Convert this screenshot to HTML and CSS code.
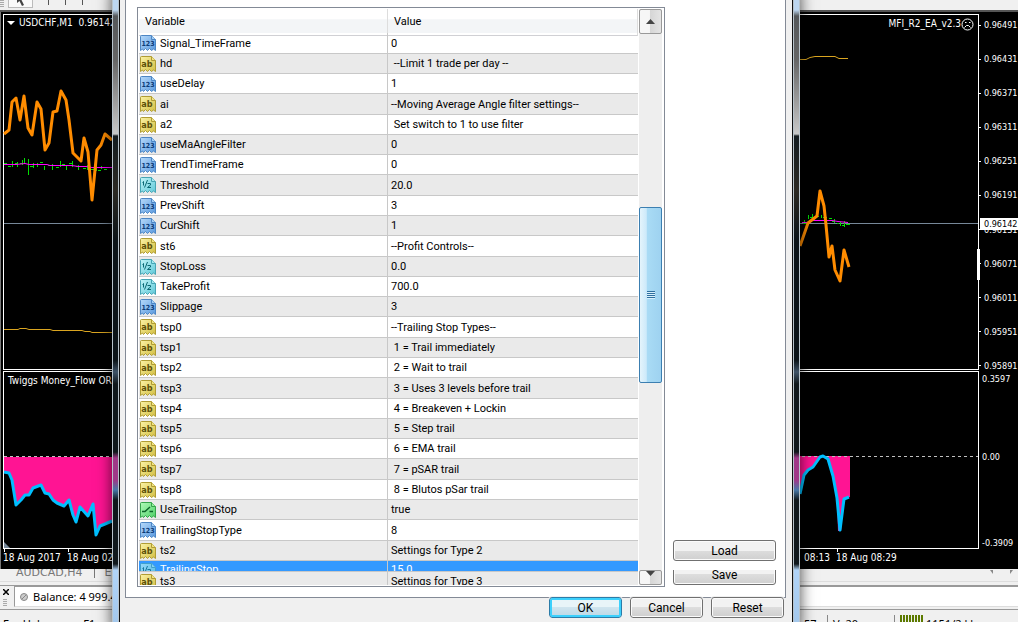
FILE: index.html
```html
<!DOCTYPE html>
<html lang="en">
<head>
    <meta charset="UTF-8">
    <meta name="viewport" content="width=device-width, initial-scale=1.0">
    <title>USDCHF,M1</title>
    <link rel="stylesheet" href="styles.css">
</head>
<body>

<!-- input type icons -->
<svg class="sprite" width="0" height="0" aria-hidden="true">
    <defs>
        <linearGradient id="blue" x2="1" y2="1"><stop offset="0" stop-color="#b4d8fa"/><stop offset="1" stop-color="#5b9ade"/></linearGradient>
        <linearGradient id="yellow" x2="1" y2="1"><stop offset="0" stop-color="#fbf2a4"/><stop offset="1" stop-color="#d3bf44"/></linearGradient>
        <linearGradient id="cyan" x2="1" y2="1"><stop offset="0" stop-color="#c0f4f8"/><stop offset="1" stop-color="#5fc8d8"/></linearGradient>
        <linearGradient id="green" x2="1" y2="1"><stop offset="0" stop-color="#b0fab8"/><stop offset="1" stop-color="#4fd068"/></linearGradient>
        <path id="note" d="M.5 1.5Q.5.5 1.5.5H11.5L15.5 4.5V15.5L13.5 14L11.5 15.5L9.5 13.5L7.5 15.5L5.5 13.5L3.5 15.5L2.5 14L.5 15.5Z"/>
        <path id="fold" d="M11.5.5V4.5H15.5"/>
        <symbol id="icon-int" viewBox="0 0 16 16">
            <use href="#note" fill="url(#blue)" stroke="#4d86c4"/>
            <use href="#fold" fill="#a5cff6" stroke="#4d86c4"/>
            <text x="8" y="11" fill="#0c3c78" class="glyph glyph-int">123</text>
        </symbol>
        <symbol id="icon-str" viewBox="0 0 16 16">
            <use href="#note" fill="url(#yellow)" stroke="#b09c34"/>
            <use href="#fold" fill="#f0e384" stroke="#b09c34"/>
            <text x="7" y="11" fill="#5c5008" class="glyph glyph-str">ab</text>
        </symbol>
        <symbol id="icon-num" viewBox="0 0 16 16">
            <use href="#note" fill="url(#cyan)" stroke="#46a4b4"/>
            <use href="#fold" fill="#a5e9f0" stroke="#46a4b4"/>
            <path d="M2.5 5.5L3.5 4.5V8.5M7.5 3L4.5 10.5M7.5 6.5H10.5V8L7.5 10.5H11" fill="none" stroke="#0b6874"/>
        </symbol>
        <symbol id="icon-bool" viewBox="0 0 16 16">
            <use href="#note" fill="url(#green)" stroke="#35a44b"/>
            <use href="#fold" fill="#98ee9f" stroke="#35a44b"/>
            <path d="M2 9.5H5L10 5M9.5 9.5H13" fill="none" stroke="#0b6428" stroke-width="1.4"/>
        </symbol>
    </defs>
</svg>

<main class="terminal">
    <div class="toolbar">
        <span class="grip"></span>
        <button class="tool" aria-label="Cursor">
            <svg width="12" height="12" viewBox="0 0 12 12"><path d="M2-6V5L4.500 3L7 8L9 7L6.500 2H10Z" transform="translate(0 -2)" fill="#444"/></svg>
        </button>
        <span class="sep"></span>
        <span class="sep"></span>
        <span class="sep"></span>
    </div>

    <section class="chart">
        <div class="pane price-pane">
            <div class="plot">
                <svg width="108" height="354" viewBox="4 15 108 354">
                    <path d="M4 223.500H112" stroke="#778899"/>
                    <path d="M4 329.500H18L20 328.500H26L29 329.500H50L53 330.500H82L85 331.500H90L92 332.500H112" class="line amber"/>
                    <path d="M4 163h3M8 166h3M12 161v6M15 163h2M17 162v5M20 163h2M22 160v5M24 158v6M28 159v16M30 166h3M33 163v5M37 163v4M40 162h3M44 166v4M48 165h4M52 164v6M56 167h3M60 161v6M62 164h3M66 166v4M69 163h3M72 161v6M76 166h2M78 165v5M83 168h3M87 165v5M90 169h4M96 165v6M98 170h3M101 166v3M104 169h3M108 167h3" class="line lime"/>
                    <path d="M4 164.500H16L25 163.500L29 164.500H47L50 165.500H72L78 166.500H86L92 167.500H112" class="line magenta"/>
                    <path d="M4 134L9 130L12 102L16 98L20 120L24 96L28 128L32 135L37 102L41 109L45 150L49 143L53 112L57 111L61 91L66 100L69 120L73 153L81 161L84 138L88 152L92 200L97 150L101 145L105 134L112 140" class="line orange"/>
                </svg>
                <h1 class="symbol"><svg width="8" height="5" viewBox="0 0 8 5"><path d="M0 0H8L4 4Z" fill="#fff"/></svg>USDCHF,M1&nbsp; 0.96142</h1>
                <svg width="178" height="354" viewBox="800 15 178 354">
                    <path d="M800 223.500H978" stroke="#778899"/>
                    <path d="M800 59.500H806L810 57.500L815 56.500H835L839 58.500H848" class="line amber"/>
                    <path d="M803 223h4M804 220v4M808 215v4M810 217h3M812 214v3M816 216h3M821 215v3M823 217h4M829 218h3M832 221h2M834 219v4M837 223h2M840 222v4M842 225h3M844 221v6M846 224h4" class="line lime"/>
                    <path d="M802 222.500H808L812 220.500H832L838 221.500L848 222.500" class="line magenta"/>
                    <path d="M800 246L808 223L817 216L820 191L824 206L826 225L829 257L832 246L835 270L840 281L844 250L849 267" class="line orange"/>
                    <path d="M978.500 249V280" stroke="#fff" stroke-width="3"/>
                </svg>
                <p class="expert">MFI_R2_EA_v2.3<svg width="13" height="13" viewBox="0 0 13 13"><circle cx="6.500" cy="6.500" r="5.500" fill="none" stroke="#fff"/><path d="M4 4.500H5.500M8 4.500H9.500M3.500 9.500L5.500 7.500H7.500L9.500 9.500" fill="none" stroke="#fff"/></svg></p>
            </div>
            <div class="axis price-axis">
                <span>0.96491</span>
                <span>0.96431</span>
                <span>0.96371</span>
                <span>0.96311</span>
                <span>0.96251</span>
                <span>0.96191</span>
                <span>0.96131</span>
                <span>0.96071</span>
                <span>0.96011</span>
                <span>0.95951</span>
                <span>0.95891</span>
                <b class="bid">0.96142</b>
            </div>
        </div>

        <div class="pane flow-pane">
            <div class="plot">
                <svg width="108" height="176" viewBox="4 372 108 176">
                    <path d="M4 457V472L9 473L12 480L16 505L21 500L25 495L29 495L33 488L41 485L45 493L49 494L53 500L57 503L64 506L69 500L73 515L76 522L80 507L88 516L93 504L96 535L100 526L105 524L112 521V457Z" fill="#ff1493"/>
                    <path d="M4 456.500H112" class="line zero"/>
                    <path d="M4 472L9 473L12 480L16 505L21 500L25 495L29 495L33 488L41 485L45 493L49 494L53 500L57 503L64 506L69 500L73 515L76 522L80 507L88 516L93 504L96 535L100 526L105 524L112 521" class="line sky"/>
                    <path d="M4 542L10 548H4Z" fill="#778899"/>
                </svg>
                <p class="indicator">Twiggs Money_Flow ORIG</p>
                <svg width="178" height="176" viewBox="800 372 178 176">
                    <path d="M800 456V492L804 475L808 470L813 467L820 457L828 457L833 476L837 498L838 531H841L844 499L850 497V456Z" fill="#ff1493"/>
                    <path d="M802 456.500H978" class="line zero"/>
                    <path d="M800 494L804 475L808 470L813 467L820 457L823 456L828 459L833 476L837 498L840 530L844 499L849 497" class="line sky"/>
                </svg>
            </div>
            <div class="axis flow-axis">
                <span>0.3597</span>
                <span>0.00</span>
                <span>-0.3909</span>
            </div>
        </div>

        <div class="times">
            <div class="times-start"><span>18 Aug 2017</span><span>18 Aug 02:55</span></div>
            <div class="times-end"><span>08:13</span><span>18 Aug 08:29</span></div>
        </div>
    </section>

    <nav class="chart-tabs">
        <a href="#">AUDCAD,H4</a><i></i><a href="#">EURUSD,H1</a>
        <svg class="tab-arrows" width="24" height="5" viewBox="0 0 24 5"><path d="M0 0H3V4ZM20 0H23L20 4Z" fill="#888"/></svg>
    </nav>

    <div class="account">
        <div class="account-side">
            <button class="close" aria-label="Close"><svg width="6" height="6" viewBox="0 0 6 6"><path d="M0 0L6 6M6 0L0 6" stroke="#000" stroke-width="1.500"/></svg></button>
            <span class="grip"></span>
        </div>
        <div class="balance">
            <svg width="8" height="8" viewBox="0 0 8 8"><circle cx="4" cy="4" r="3.500" fill="#ccc" stroke="#888"/><path d="M2 6L6 2" stroke="#888"/></svg>
            Balance: 4 999.40
        </div>
    </div>

    <footer class="status">
        <span class="help">For Help, press F1</span>
        <div class="status-end">
            <span>57</span>
            <span>V: 20</span>
            <span><i class="signal"></i>1151/2 kb</span>
        </div>
    </footer>
</main>

<section class="dialog" role="dialog" aria-label="Expert inputs">
    <div class="glass"></div>
    <div class="dialog-body">
        <div class="tab-page">
            <div class="list">
                <table>
                    <thead>
                        <tr><th>Variable</th><th>Value</th></tr>
                    </thead>
                    <tbody>
                        <tr><td><svg class="icon"><use href="#icon-int"/></svg>Signal_TimeFrame</td><td>0</td></tr>
                        <tr><td><svg class="icon"><use href="#icon-str"/></svg>hd</td><td>&nbsp;--Limit 1 trade per day --</td></tr>
                        <tr><td><svg class="icon"><use href="#icon-int"/></svg>useDelay</td><td>1</td></tr>
                        <tr><td><svg class="icon"><use href="#icon-str"/></svg>ai</td><td>--Moving Average Angle filter settings--</td></tr>
                        <tr><td><svg class="icon"><use href="#icon-str"/></svg>a2</td><td>&nbsp;Set switch to 1 to use filter</td></tr>
                        <tr><td><svg class="icon"><use href="#icon-int"/></svg>useMaAngleFilter</td><td>0</td></tr>
                        <tr><td><svg class="icon"><use href="#icon-int"/></svg>TrendTimeFrame</td><td>0</td></tr>
                        <tr><td><svg class="icon"><use href="#icon-num"/></svg>Threshold</td><td>20.0</td></tr>
                        <tr><td><svg class="icon"><use href="#icon-int"/></svg>PrevShift</td><td>3</td></tr>
                        <tr><td><svg class="icon"><use href="#icon-int"/></svg>CurShift</td><td>1</td></tr>
                        <tr><td><svg class="icon"><use href="#icon-str"/></svg>st6</td><td>--Profit Controls--</td></tr>
                        <tr><td><svg class="icon"><use href="#icon-num"/></svg>StopLoss</td><td>0.0</td></tr>
                        <tr><td><svg class="icon"><use href="#icon-num"/></svg>TakeProfit</td><td>700.0</td></tr>
                        <tr><td><svg class="icon"><use href="#icon-int"/></svg>Slippage</td><td>3</td></tr>
                        <tr><td><svg class="icon"><use href="#icon-str"/></svg>tsp0</td><td>--Trailing Stop Types--</td></tr>
                        <tr><td><svg class="icon"><use href="#icon-str"/></svg>tsp1</td><td>&nbsp;1 = Trail immediately</td></tr>
                        <tr><td><svg class="icon"><use href="#icon-str"/></svg>tsp2</td><td>&nbsp;2 = Wait to trail</td></tr>
                        <tr><td><svg class="icon"><use href="#icon-str"/></svg>tsp3</td><td>&nbsp;3 = Uses 3 levels before trail</td></tr>
                        <tr><td><svg class="icon"><use href="#icon-str"/></svg>tsp4</td><td>&nbsp;4 = Breakeven + Lockin</td></tr>
                        <tr><td><svg class="icon"><use href="#icon-str"/></svg>tsp5</td><td>&nbsp;5 = Step trail</td></tr>
                        <tr><td><svg class="icon"><use href="#icon-str"/></svg>tsp6</td><td>&nbsp;6 = EMA trail</td></tr>
                        <tr><td><svg class="icon"><use href="#icon-str"/></svg>tsp7</td><td>&nbsp;7 = pSAR trail</td></tr>
                        <tr><td><svg class="icon"><use href="#icon-str"/></svg>tsp8</td><td>&nbsp;8 = Blutos pSar trail</td></tr>
                        <tr><td><svg class="icon"><use href="#icon-bool"/></svg>UseTrailingStop</td><td>true</td></tr>
                        <tr><td><svg class="icon"><use href="#icon-int"/></svg>TrailingStopType</td><td>8</td></tr>
                        <tr><td><svg class="icon"><use href="#icon-str"/></svg>ts2</td><td>Settings for Type 2</td></tr>
                        <tr class="selected"><td><svg class="icon"><use href="#icon-num"/></svg>TrailingStop</td><td>15.0</td></tr>
                        <tr><td><svg class="icon"><use href="#icon-str"/></svg>ts3</td><td>Settings for Type 3</td></tr>
                    </tbody>
                </table>
                <div class="scrollbar">
                    <button class="scroll-btn" aria-label="Scroll up"><svg width="9" height="5" viewBox="0 0 9 5"><path d="M4.500 0L9 5H0Z" fill="#444"/></svg></button>
                    <div class="thumb"><i></i></div>
                    <button class="scroll-btn down" aria-label="Scroll down"><svg width="9" height="5" viewBox="0 0 9 5"><path d="M0 0H9L4.500 5Z" fill="#444"/></svg></button>
                </div>
            </div>
            <div class="file-actions">
                <button class="btn">Load</button>
                <div class="clip"><button class="btn">Save</button></div>
            </div>
        </div>
        <div class="dialog-actions">
            <button class="btn default">OK</button>
            <button class="btn">Cancel</button>
            <button class="btn">Reset</button>
        </div>
    </div>
    <div class="glass"></div>
</section>

</body>
</html>
```
FILE: styles.css
```css
* {
    box-sizing: border-box;
}
body {
    margin: 0;
    position: relative;
    height: 100vh;
    overflow: hidden;
    background-color: #f0f0f0;
    font-family: "DejaVu Sans Condensed", "DejaVu Sans", sans-serif;
    font-size: 10px;
}
h1, p {
    margin: 0;
    font-size: 10px;
    font-weight: normal;
}
svg {
    flex: none;
}
button {
    padding: 0;
    font-family: inherit;
}
.sprite {
    position: absolute;
}
.glyph {
    font-family: "DejaVu Sans Condensed", "DejaVu Sans", sans-serif;
    font-weight: bold;
    text-anchor: middle;
}
.glyph-int {
    font-size: 7px;
}
.glyph-str {
    font-size: 9px;
}

/* trading terminal */
.toolbar {
    display: flex;
    height: 12px;
    border-bottom: 2px solid #555;
    background-color: #f0f0f0;
}
.grip {
    width: 4px;
    height: 8px;
    background: repeating-linear-gradient(#aaa 0 1px, transparent 1px 2px);
}
.tool {
    display: flex;
    width: 25px;
    height: 8px;
    margin: 0 15px 0 4px;
    justify-content: center;
    overflow: hidden;
    border: 1px solid #bbb;
    border-top: none;
    background-color: #fafafa;
}
.sep {
    width: 1px;
    height: 5px;
    margin-right: 16px;
    background-color: #555;
}
.chart {
    height: 557px;
    padding: 2px 0 0 3px;
    background-color: #000;
    color: #fff;
    box-shadow: inset 1px 0 #777;
}
.pane {
    display: flex;
}
.plot {
    position: relative;
    display: flex;
    flex: 1;
    justify-content: space-between;
    border: 1px solid #fff;
}
.plot svg {
    overflow: visible;
}
.price-pane {
    height: 356px;
}
.flow-pane {
    height: 178px;
    margin-top: 1px;
}
.line {
    fill: none;
    stroke-width: 1;
    stroke-linejoin: round;
}
.amber {
    stroke: #daa520;
}
.lime {
    stroke: #00e000;
    shape-rendering: crispEdges;
}
.magenta {
    stroke: #ff00ff;
}
.orange {
    stroke: #ff8c00;
    stroke-width: 3;
}
.sky {
    stroke: #00bfff;
    stroke-width: 3;
}
.zero {
    stroke: #c0c0c0;
    stroke-dasharray: 3 3;
}
.symbol, .expert, .indicator {
    position: absolute;
    top: 1px;
    display: flex;
    align-items: center;
    line-height: 14px;
    white-space: nowrap;
}
.symbol {
    left: 3px;
    gap: 4px;
}
.expert {
    right: 4px;
    top: 2px;
}
.indicator {
    left: 4px;
    top: 2px;
}
.axis {
    position: relative;
    width: 39px;
    font-size: 9px;
    line-height: 12px;
}
.price-axis {
    display: flex;
    flex-direction: column;
    justify-content: space-between;
    margin-bottom: -2px;
    padding-top: 5px;
}
.price-axis span {
    display: flex;
    align-items: center;
}
.price-axis span::before {
    content: "";
    flex: none;
    width: 2px;
    height: 1px;
    margin-right: 3px;
    background-color: #fff;
}
.bid {
    position: absolute;
    top: 204px;
    left: 1px;
    right: 0;
    padding-left: 4px;
    background-color: #fff;
    color: #000;
    font-weight: normal;
}
.flow-axis {
    display: grid;
    grid-template-rows: 78px 1fr auto;
    padding: 2px 0 0 3px;
}
.times {
    display: flex;
    justify-content: space-between;
    margin-right: 40px;
    line-height: 18px;
    white-space: nowrap;
}
.times-start, .times-end {
    display: flex;
}
.times-start span {
    width: 64px;
}
.times-end {
    width: 178px;
    padding-left: 4px;
}
.times-end span:first-child {
    width: 32px;
}
.times span {
    background: linear-gradient(#fff, #fff) 1px 0 / 1px 3px no-repeat;
}
.times-end span:first-child {
    background: none;
}
.chart-tabs {
    display: flex;
    align-items: flex-start;
    height: 17px;
    padding: 0 4px 0 16px;
    overflow: hidden;
    border-bottom: 1px solid #999;
    box-shadow: inset 0 -3px #f0f0f0, inset 0 -4px #ddd;
    line-height: 8px;
}
.chart-tabs a {
    color: #777;
    font-family: "DejaVu Sans", sans-serif;
    font-size: 11px;
    text-decoration: none;
}
.chart-tabs i {
    width: 1px;
    height: 9px;
    margin: 0 10px 0 11px;
    background-color: #777;
}
.tab-arrows {
    margin: 1px 0 0 auto;
}
.account {
    display: flex;
    height: 24px;
    border-bottom: 1px solid #999;
}
.account-side {
    display: flex;
    flex-direction: column;
    gap: 4px;
    width: 14px;
    padding: 3px 0 0 3px;
}
.close {
    display: flex;
    border: none;
    background: none;
}
.balance {
    display: flex;
    flex: 1;
    align-items: center;
    gap: 5px;
    height: 21px;
    padding-left: 5px;
    border: 1px solid #999;
    border-width: 1px 0 1px 1px;
    border-bottom-color: #ddd;
    background-color: #fff;
    font-family: "Noto Sans", sans-serif;
    font-size: 11px;
}
.status {
    display: flex;
    justify-content: space-between;
    height: 24px;
    padding: 5px 0 0 3px;
    font-family: "Noto Sans", sans-serif;
    font-size: 11px;
    line-height: 18px;
}
.status-end {
    display: flex;
    width: 214px;
}
.status-end span {
    display: flex;
    flex: none;
    gap: 3px;
    width: 67px;
    padding-left: 5px;
    border-left: 1px solid #888;
    white-space: nowrap;
}
.status-end span:first-child {
    width: 23px;
    padding-left: 0;
    border: none;
}
.signal {
    flex: none;
    width: 23px;
    height: 12px;
    background: repeating-linear-gradient(90deg, #5c7a00 0 2px, transparent 2px 3px);
}

/* expert properties window */
.dialog {
    position: absolute;
    top: -10px;
    bottom: -10px;
    left: 112px;
    right: 218px;
    display: flex;
    padding: 10px 0;
    background-color: #f0f0f0;
    box-shadow: 0 0 14px rgba(0, 0, 0, 0.7);
    color: #000;
    font-family: Roboto, "Liberation Sans", sans-serif;
    font-size: 11px;
}
.glass {
    width: 7px;
    border: 1px solid #b8c4cc;
    border-width: 0 1px;
    background: linear-gradient(#bcd6f0 0 10px, #55585a 16px, #666 60px, #c8c8c8 134px, #141c20 136px, #2c2a24 190px, #0c1418 240px, #0c1418 360px, #405468 372px, #10181c 384px, #10181c 452px, #a03888 458px, #a03888 480px, #4878a8 490px, #10181c 500px, #10181c 564px, #b0d4f8 570px, #a4c8ec);
}
.dialog-body {
    flex: 1;
    border: 1px solid #111;
    border-width: 0 1px;
    padding: 0 6px 0 5px;
}
.tab-page {
    display: flex;
    gap: 8px;
    height: 598px;
    padding: 7px 9px 10px 11px;
    border: 1px solid #838a96;
    border-top: none;
    background-color: #fff;
}
.list {
    display: flex;
    flex: 1;
    gap: 1px;
    overflow: hidden;
    padding: 1px;
    border: 1px solid #838a96;
}
table {
    display: block;
    flex: 1;
    overflow: hidden;
}
thead, tbody {
    display: block;
}
tr {
    display: grid;
    grid-template-columns: 249px 1fr;
    height: 20px;
}
tbody tr:nth-child(7n+1), tbody tr:nth-child(7n+4) {
    height: 21px;
}
thead tr {
    height: 24px;
    background: linear-gradient(#fff 40%, #f3f5f7 45%, #f3f5f7);
}
th {
    padding-left: 6px;
    border-right: 1px solid #ddd;
    border-bottom: 1px solid #d0d0d4;
    font-weight: normal;
    line-height: 24px;
    text-align: left;
}
td {
    display: flex;
    align-items: center;
    gap: 4px;
    padding: 0 0 0 3px;
    overflow: hidden;
    border-bottom: 1px solid #c8c8c8;
    white-space: nowrap;
}
td:first-child {
    padding-left: 1px;
    border-right: 1px solid #c8c8c8;
}
tbody tr:nth-child(even) {
    background-color: #eaeaea;
}
tbody tr.selected {
    height: 11px;
    background-color: #3399ff;
    color: #fff;
}
.selected td {
    align-items: flex-start;
    line-height: 18px;
}
.icon {
    width: 16px;
    height: 16px;
}
.selected .icon {
    margin-top: 2px;
    opacity: 0.7;
}
.scrollbar {
    display: flex;
    flex-direction: column;
    width: 23px;
    margin-right: 1px;
    background-color: #eee;
}
.scroll-btn {
    display: flex;
    align-items: center;
    justify-content: center;
    height: 25px;
    border: 1px solid #999;
    border-radius: 2px;
    background: linear-gradient(90deg, #f6f6f6 45%, #d6d6d6 50%, #e4e4e4);
}
.scroll-btn.down {
    align-items: flex-start;
    height: 15px;
    margin-top: auto;
}
.thumb {
    display: flex;
    align-items: center;
    justify-content: center;
    height: 176px;
    margin-top: 173px;
    border: 1px solid #3c7fb1;
    border-radius: 2px;
    background: linear-gradient(90deg, #e4f4fc 0, #cdeafa 30%, #a9dbf5 35%, #9ed2f0);
}
.thumb i {
    width: 8px;
    height: 8px;
    background: repeating-linear-gradient(#2f6f9f 0 1px, #d8f0fc 1px 2px);
}
.btn {
    display: block;
    width: 100%;
    height: 21px;
    border: 1px solid #707070;
    border-radius: 3px;
    background: linear-gradient(#f2f2f2 50%, #dddddd 50%, #cfcfcf);
    box-shadow: inset 0 0 0 1px #fbfbfb;
    font-size: 12px;
    line-height: 18px;
}
.file-actions {
    display: flex;
    flex-direction: column;
    justify-content: flex-end;
    gap: 9px;
    width: 103px;
    padding-bottom: 2px;
}
.clip {
    display: flex;
    align-items: flex-end;
    height: 15px;
    overflow: hidden;
}
.dialog-actions {
    position: relative;
    display: flex;
    justify-content: flex-end;
    gap: 8px;
    margin-top: -1px;
    padding-right: 2px;
}
.dialog-actions .btn {
    width: 73px;
    outline: 1px solid #f0f0f0;
}
.dialog-actions .default {
    border-color: #2c7ca8;
    background: linear-gradient(#e8f4f8 50%, #cfe4ee 50%, #bcd8e6);
    box-shadow: inset 0 0 0 2px #3cd0fc;
}
```
